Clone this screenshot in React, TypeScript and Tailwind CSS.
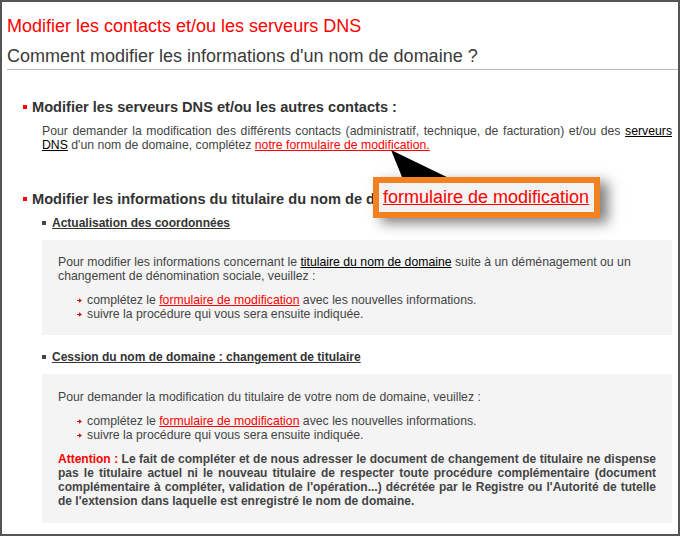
import React from "react";

const Arrow = () => (
  <svg width="5" height="5" viewBox="0 0 5 5" className="shrink-0">
    <polygon points="0,2 2,2 2,0.3 5,2.5 2,4.7 2,3 0,3" fill="#d2141e" />
  </svg>
);

const RedLink = ({ children }: { children: React.ReactNode }) => (
  <span className="text-[#ff0000] underline underline-offset-[1px]">{children}</span>
);

const BlackLink = ({ children }: { children: React.ReactNode }) => (
  <span className="text-black underline underline-offset-[1px]">{children}</span>
);

export default function App() {
  return (
    <div
      className="relative w-[680px] h-[536px] border-2 border-[#555555] bg-white overflow-hidden"
      style={{ fontFamily: '"Liberation Sans", Arial, sans-serif' }}
    >
      <div className="pl-[5px] pt-[14px] text-[18px] leading-[21px] text-[#ff0000]">
        Modifier les contacts et/ou les serveurs DNS
      </div>
      <div className="ml-[5px] mt-[9px] pb-[2px] border-b border-[#bbbbbb] text-[18px] leading-[21px] text-[#3a3a3a]">
        Comment modifier les informations d'un nom de domaine ?
      </div>

      {/* Section 1 */}
      <div className="mt-[29px] pl-[21px] flex items-center text-[14.6px] leading-[16px] font-bold text-[#333333]">
        <span className="w-[4px] h-[4px] bg-[#ff0000] mr-[5px]" />
        Modifier les serveurs DNS et/ou les autres contacts :
      </div>
      <p className="mt-[9px] ml-[40px] mr-[6px] text-[12.25px] leading-[14px] text-[#444444] text-justify">
        Pour demander la modification des différents contacts (administratif, technique, de facturation) et/ou des{" "}
        <BlackLink>serveurs DNS</BlackLink> d'un nom de domaine, complétez <RedLink>notre formulaire de modification.</RedLink>
      </p>

      {/* Section 2 */}
      <div className="mt-[39px] pl-[21px] flex items-center text-[14.6px] leading-[16px] font-bold text-[#333333]">
        <span className="w-[4px] h-[4px] bg-[#ff0000] mr-[5px]" />
        Modifier les informations du titulaire du nom de domaine :
      </div>

      <div className="mt-[9px] ml-[40px] flex items-center text-[12px] leading-[14px] font-bold text-[#333333]">
        <span className="w-[4px] h-[4px] bg-[#444444] mr-[6px]" />
        <span className="underline underline-offset-[1px]">Actualisation des coordonnées</span>
      </div>
      <div className="mt-[10px] ml-[40px] mr-[6px] bg-[#f4f4f4] pt-[15px] pb-[14px] pl-[16px] pr-[16px] text-[12.25px] leading-[14px] text-[#444444]">
        <p>
          Pour modifier les informations concernant le <BlackLink>titulaire du nom de domaine</BlackLink> suite à un déménagement ou un
          changement de dénomination sociale, veuillez :
        </p>
        <div className="mt-[10px] ml-[19px]">
          <div className="flex items-center gap-[5px]">
            <Arrow />
            <span>
              complétez le <RedLink>formulaire de modification</RedLink> avec les nouvelles informations.
            </span>
          </div>
          <div className="flex items-center gap-[5px]">
            <Arrow />
            <span>suivre la procédure qui vous sera ensuite indiquée.</span>
          </div>
        </div>
      </div>

      <div className="mt-[15px] ml-[40px] flex items-center text-[12px] leading-[14px] font-bold text-[#333333]">
        <span className="w-[4px] h-[4px] bg-[#444444] mr-[6px]" />
        <span className="underline underline-offset-[1px]">Cession du nom de domaine : changement de titulaire</span>
      </div>
      <div className="mt-[10px] ml-[40px] mr-[6px] bg-[#f4f4f4] pt-[16px] pb-[15px] pl-[16px] pr-[16px] text-[12.25px] leading-[14px] text-[#444444]">
        <p>Pour demander la modification du titulaire de votre nom de domaine, veuillez :</p>
        <div className="mt-[10px] ml-[19px]">
          <div className="flex items-center gap-[5px]">
            <Arrow />
            <span>
              complétez le <RedLink>formulaire de modification</RedLink> avec les nouvelles informations.
            </span>
          </div>
          <div className="flex items-center gap-[5px]">
            <Arrow />
            <span>suivre la procédure qui vous sera ensuite indiquée.</span>
          </div>
        </div>
        <p className="mt-[10px] text-[12px] font-bold text-justify text-[#444444]">
          <span className="text-[#ff0000]">Attention :</span> Le fait de compléter et de nous adresser le document de changement de
          titulaire ne dispense pas le titulaire actuel ni le nouveau titulaire de respecter toute procédure complémentaire (document
          complémentaire à compléter, validation de l'opération...) décrétée par le Registre ou l'Autorité de tutelle de l'extension
          dans laquelle est enregistré le nom de domaine.
        </p>
      </div>

      {/* Callout */}
      <svg className="absolute left-[389px] top-[148px]" width="70" height="34" viewBox="0 0 70 34">
        <polygon points="0,0 13,32 66,32" fill="#000000" />
      </svg>
      <div className="absolute left-[371px] top-[175px] w-[227px] h-[41px] border-[6px] border-[#f4811f] bg-[#f3f3f3] shadow-[8px_5px_12px_rgba(0,0,0,0.5)] pl-[4px] text-[18px] leading-[29px]">
        <RedLink>formulaire de modification</RedLink>
      </div>
    </div>
  );
}
